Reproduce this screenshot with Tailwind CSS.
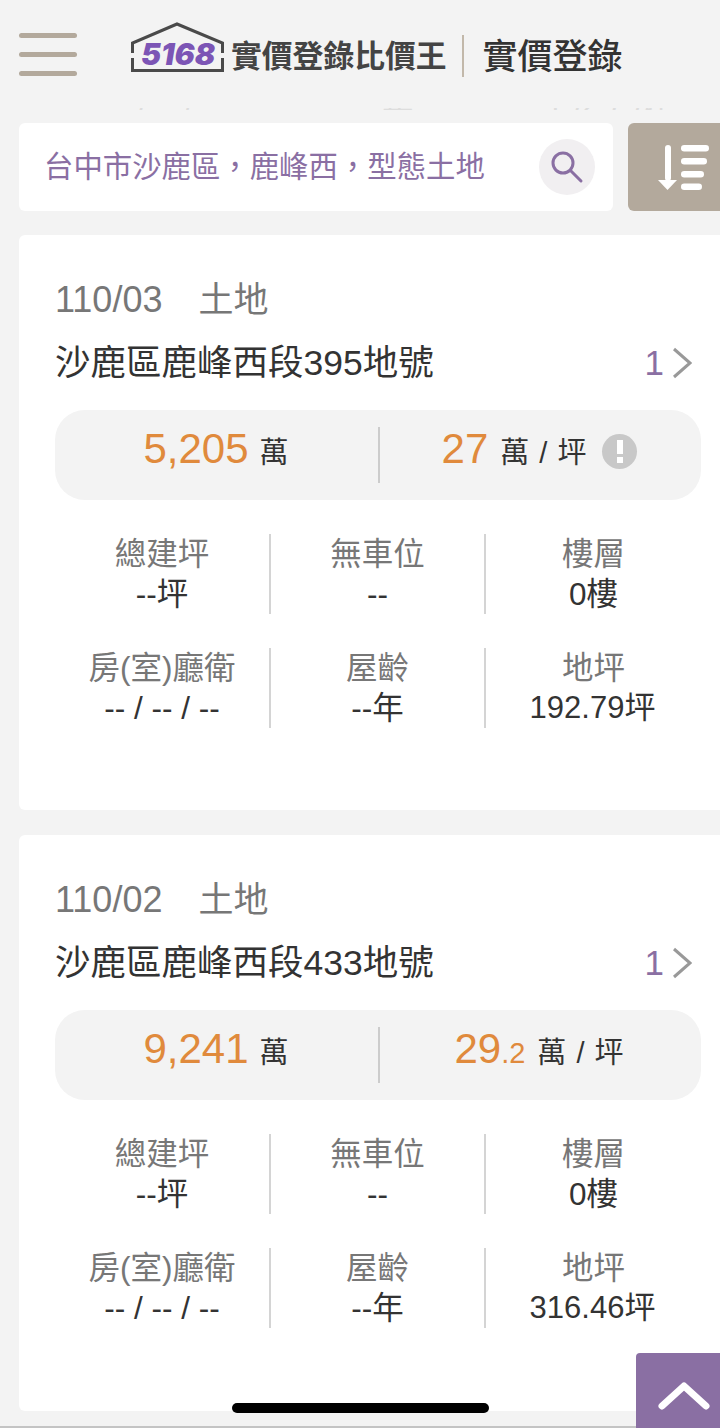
<!DOCTYPE html>
<html lang="zh-Hant">
<head>
    <meta charset="UTF-8">
    <meta name="viewport" content="width=device-width, initial-scale=1.0">
    <title>實價登錄比價王</title>
    <script src="https://cdn.jsdelivr.net/npm/@tailwindcss/browser@4"></script>
</head>
<body class="bg-[#f3f3f3] font-['Liberation_Sans','Noto_Sans_CJK_TC',sans-serif]">
<div class="relative w-[720px] h-[1428px] overflow-hidden">

    <!-- Header -->
    <header class="flex items-center h-[108px] pl-[19px]">
        <div class="flex flex-col gap-[14px] w-[58px]">
            <span class="block h-[5px] rounded-full bg-[#b3a99c]"></span>
            <span class="block h-[5px] rounded-full bg-[#b3a99c]"></span>
            <span class="block h-[5px] rounded-full bg-[#b3a99c]"></span>
        </div>
        <div class="relative ml-[54px] w-[93px] h-[50px] -mt-[14px]">
            <svg class="absolute inset-0" width="93" height="50" viewBox="0 0 93 50" fill="none">
                <path d="M1.5 31V21L46 2L91.5 21V31" stroke="#4a4a4a" stroke-width="3"/>
                <path d="M1.5 36V48.5H91.5V36" stroke="#4a4a4a" stroke-width="3"/>
            </svg>
            <span class="absolute left-[10px] top-[21px] text-[30px] leading-[22px] font-black italic font-['Inter',sans-serif] text-[#7c55b5]">5168</span>
        </div>
        <span class="ml-[7px] mt-[6px] text-[30.8px] leading-none font-bold text-[#444444] whitespace-nowrap">實價登錄比價王</span>
        <span class="ml-[15px] mt-[4px] w-[2px] h-[42px] bg-[#c2b8aa]"></span>
        <span class="ml-[19px] mt-[4px] text-[35px] leading-none font-medium text-[#333333] whitespace-nowrap">實價登錄</span>
    </header>

    <!-- Clipped row scrolled under the header -->
    <div class="h-[2px] overflow-hidden ml-[19px]">
        <div class="grid grid-cols-3 w-[701px] pl-[36px] -mt-[23px] text-[31px] leading-[40px] text-[#dddddd] text-center">
            <span>-- / -- / --</span>
            <span>--年</span>
            <span>192.79坪</span>
        </div>
    </div>

    <!-- Search -->
    <div class="flex mt-[13px] ml-[19px] h-[88px]">
        <div class="flex items-center justify-between w-[594px] pl-[25px] pr-[18px] bg-white rounded-md">
            <span class="text-[29.4px] text-[#8a6fa3] whitespace-nowrap">台中市沙鹿區，鹿峰西，型態土地</span>
            <span class="flex items-center justify-center w-[56px] h-[56px] rounded-full bg-[#f1eff1]">
                <svg width="34" height="34" viewBox="0 0 34 34" fill="none" stroke="#8a6fa3" stroke-width="3" stroke-linecap="round">
                    <circle cx="13" cy="13" r="10"/>
                    <path d="M20.5 20.5L31 31"/>
                </svg>
            </span>
        </div>
        <div class="flex items-center ml-[15px] flex-1 pl-[30px] bg-[#b3a99c] rounded-l-md">
            <svg width="52" height="45" viewBox="0 0 52 45" fill="white">
                <rect x="7" y="0" width="6" height="36" rx="3"/>
                <path d="M0 35H19L9.5 45z"/>
                <rect x="23" y="0" width="28" height="6.5" rx="3.2"/>
                <rect x="23" y="13" width="26" height="6.5" rx="3.2"/>
                <rect x="23" y="26" width="23" height="6.5" rx="3.2"/>
                <rect x="23" y="38.5" width="21" height="6.5" rx="3.2"/>
            </svg>
        </div>
    </div>

    <!-- Card 1 -->
    <section class="mt-[24px] ml-[19px] h-[575px] pt-[40px] pl-[36px] pr-[19px] bg-white rounded-l-md">
        <div class="text-[36px] leading-[50px] text-[#777777]">110/03<span class="ml-[36px] text-[35px]">土地</span></div>
        <div class="flex items-center justify-between mt-[13px] h-[50px]">
            <span class="text-[35.5px] leading-[50px] text-[#333333] whitespace-nowrap">沙鹿區鹿峰西段395地號</span>
            <span class="flex items-center gap-[8px] pr-[9px]">
                <span class="text-[35px] text-[#8a6fa3]">1</span>
                <svg width="20" height="32" viewBox="0 0 20 32" fill="none" stroke="#999999" stroke-width="3"><path d="M2 2L18 16L2 30"/></svg>
            </span>
        </div>
        <div class="grid grid-cols-[323px_2px_321px] items-center mt-[22px] h-[90px] rounded-[30px] bg-[#f3f3f3]">
            <div class="flex items-baseline justify-center gap-[11px] pb-[14px] pr-[1px]">
                <span class="text-[42px] text-[#e08a3c]">5,205</span>
                <span class="text-[29px] text-[#333333]">萬</span>
            </div>
            <span class="w-[2px] h-[56px] bg-[#cccccc]"></span>
            <div class="flex items-center justify-center gap-[16px] pr-[2px]">
                <div class="flex items-baseline gap-[12px] pb-[14px]">
                    <span class="text-[42px] text-[#e08a3c]">27</span>
                    <span class="text-[29px] text-[#333333] [word-spacing:2px]">萬 / 坪</span>
                </div>
                <span class="flex flex-col items-center justify-center gap-[3px] w-[35px] h-[35px] mb-[8px] rounded-full bg-[#c8c8c8]">
                    <span class="block w-[6px] h-[14px] bg-white"></span>
                    <span class="block w-[6px] h-[6px] bg-white"></span>
                </span>
            </div>
        </div>
        <div class="grid grid-cols-[216px_215px_215px] gap-y-[34px] mt-[34px] text-center text-[31.5px] leading-[40px]">
            <div class="border-r-2 border-[#d4d4d4]"><div class="text-[#777777]">總建坪</div><div class="text-[#333333]">--坪</div></div>
            <div class="border-r-2 border-[#d4d4d4]"><div class="text-[#777777]">無車位</div><div class="text-[#333333]">--</div></div>
            <div><div class="text-[#777777]">樓層</div><div class="text-[#333333]">0樓</div></div>
            <div class="border-r-2 border-[#d4d4d4]"><div class="text-[#777777]">房(室)廳衛</div><div class="text-[#333333]">-- / -- / --</div></div>
            <div class="border-r-2 border-[#d4d4d4]"><div class="text-[#777777]">屋齡</div><div class="text-[#333333]">--年</div></div>
            <div><div class="text-[#777777]">地坪</div><div class="text-[31px] pr-[2px] text-[#333333]">192.79坪</div></div>
        </div>
    </section>

    <!-- Card 2 -->
    <section class="mt-[25px] ml-[19px] h-[576px] pt-[40px] pl-[36px] pr-[19px] bg-white rounded-l-md">
        <div class="text-[36px] leading-[50px] text-[#777777]">110/02<span class="ml-[36px] text-[35px]">土地</span></div>
        <div class="flex items-center justify-between mt-[13px] h-[50px]">
            <span class="text-[35.5px] leading-[50px] text-[#333333] whitespace-nowrap">沙鹿區鹿峰西段433地號</span>
            <span class="flex items-center gap-[8px] pr-[9px]">
                <span class="text-[35px] text-[#8a6fa3]">1</span>
                <svg width="20" height="32" viewBox="0 0 20 32" fill="none" stroke="#999999" stroke-width="3"><path d="M2 2L18 16L2 30"/></svg>
            </span>
        </div>
        <div class="grid grid-cols-[323px_2px_321px] items-center mt-[22px] h-[90px] rounded-[30px] bg-[#f3f3f3]">
            <div class="flex items-baseline justify-center gap-[11px] pb-[14px] pr-[1px]">
                <span class="text-[42px] text-[#e08a3c]">9,241</span>
                <span class="text-[29px] text-[#333333]">萬</span>
            </div>
            <span class="w-[2px] h-[56px] bg-[#cccccc]"></span>
            <div class="flex items-baseline justify-center gap-[12px] pb-[14px] pr-[3px]">
                <span class="text-[42px] text-[#e08a3c]">29<span class="text-[29px]">.2</span></span>
                <span class="text-[29px] text-[#333333] [word-spacing:2px]">萬 / 坪</span>
            </div>
        </div>
        <div class="grid grid-cols-[216px_215px_215px] gap-y-[34px] mt-[34px] text-center text-[31.5px] leading-[40px]">
            <div class="border-r-2 border-[#d4d4d4]"><div class="text-[#777777]">總建坪</div><div class="text-[#333333]">--坪</div></div>
            <div class="border-r-2 border-[#d4d4d4]"><div class="text-[#777777]">無車位</div><div class="text-[#333333]">--</div></div>
            <div><div class="text-[#777777]">樓層</div><div class="text-[#333333]">0樓</div></div>
            <div class="border-r-2 border-[#d4d4d4]"><div class="text-[#777777]">房(室)廳衛</div><div class="text-[#333333]">-- / -- / --</div></div>
            <div class="border-r-2 border-[#d4d4d4]"><div class="text-[#777777]">屋齡</div><div class="text-[#333333]">--年</div></div>
            <div><div class="text-[#777777]">地坪</div><div class="text-[31px] pr-[2px] text-[#333333]">316.46坪</div></div>
        </div>
    </section>

    <!-- Bottom edge, back to top, home indicator -->
    <div class="absolute left-0 bottom-0 w-full h-[2px] bg-[#c4c4c4]"></div>
    <div class="absolute right-0 bottom-0 flex items-center justify-center w-[84px] h-[75px] pt-[10px] pl-[12px] bg-[#8a6fa3] rounded-tl-sm">
        <svg width="52" height="30" viewBox="0 0 52 30" fill="none" stroke="white" stroke-width="7" stroke-linecap="round" stroke-linejoin="round"><path d="M4 25L26 5L48 25"/></svg>
    </div>
    <div class="absolute left-[232px] top-[1403px] w-[257px] h-[10px] rounded-full bg-black"></div>
</div>
</body>
</html>
